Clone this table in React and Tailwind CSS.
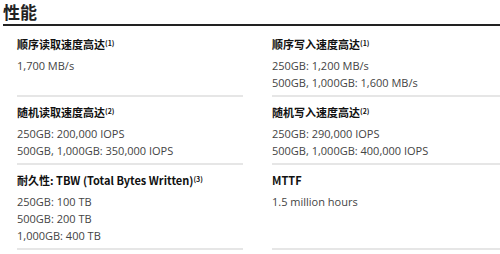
const specs = [
  { title: "顺序读取速度高达", note: "(1)", lines: ["1,700 MB/s"] },
  { title: "顺序写入速度高达", note: "(1)", lines: ["250GB: 1,200 MB/s", "500GB, 1,000GB: 1,600 MB/s"] },
  { title: "随机读取速度高达", note: "(2)", lines: ["250GB: 200,000 IOPS", "500GB, 1,000GB: 350,000 IOPS"] },
  { title: "随机写入速度高达", note: "(2)", lines: ["250GB: 290,000 IOPS", "500GB, 1,000GB: 400,000 IOPS"] },
  { title: "耐久性: TBW (Total Bytes Written)", note: "(3)", lines: ["250GB: 100 TB", "500GB: 200 TB", "1,000GB: 400 TB"] },
  { title: "MTTF", note: null, lines: ["1.5 million hours"] },
];

function SpecCell({ spec }) {
  return (
    <div className="border-b-2 border-[#e6e6e6] pt-[7px] pb-[4px]">
      <h3 className="font-['Noto_Sans_CJK_SC',sans-serif] text-[11px] leading-[16px] font-bold text-[#111]">
        {spec.title}
        {spec.note && <sup className="text-[7px] font-bold">{spec.note}</sup>}
      </h3>
      <div className="mt-[5px] font-['Open_Sans',sans-serif] text-[11px] leading-[17px] text-[#444]">
        {spec.lines.map((line) => (
          <p key={line}>{line}</p>
        ))}
      </div>
    </div>
  );
}

export default function App() {
  return (
    <div className="h-[254px] w-[500px] overflow-hidden bg-white pl-[3px]">
      <h2 className="font-['Noto_Sans_CJK_SC',sans-serif] text-[17px] leading-[24px] font-bold text-[#222]">
        性能
      </h2>
      <div className="h-[2px] bg-[#222]" />
      <div className="mt-[3px] grid grid-cols-[226px_1fr] gap-x-[29px] pl-[14px]">
        {specs.map((spec) => (
          <SpecCell key={spec.title} spec={spec} />
        ))}
      </div>
    </div>
  );
}
